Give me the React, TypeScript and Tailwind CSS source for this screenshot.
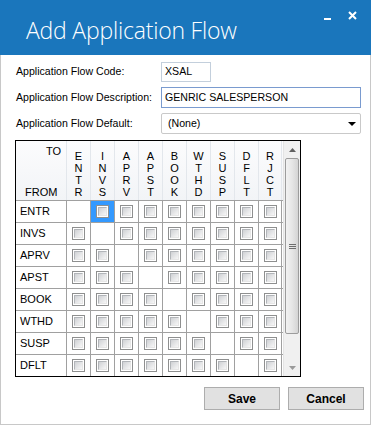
import React from "react";

const ROWS = ["ENTR", "INVS", "APRV", "APST", "BOOK", "WTHD", "SUSP", "DFLT"];
const COLS = ["ENTR", "INVS", "APRV", "APST", "BOOK", "WTHD", "SUSP", "DFLT", "RJCT"];

function Check() {
  return (
    <div className="w-[13px] h-[13px] border border-[#8e8f8f] bg-white p-[1px]">
      <div className="w-full h-full border-t border-l border-[#b2b5b9] border-r border-b border-r-[#e6e6e6] border-b-[#e6e6e6] bg-[linear-gradient(135deg,#cfd1d4,#f7f7f7)]" />
    </div>
  );
}

function Scrollbar() {
  return (
    <div className="w-[17px] flex flex-col bg-[#f0f0f0] border-l border-[#e4e4e4]">
      <div className="h-[17px] flex items-center justify-center">
        <svg width="7" height="4" viewBox="0 0 7 4">
          <path d="M3.5 0 L7 4 L0 4 Z" fill="#606060" />
        </svg>
      </div>
      <div className="h-[176px] mx-[1px] rounded-[2px] border border-[#9c9c9c] bg-[linear-gradient(90deg,#f2f2f2,#e6e6e6_50%,#d4d4d4)] flex items-center justify-center">
        <div className="flex flex-col gap-[1px]">
          <div className="w-[7px] h-[1px] bg-[#6e6e6e]" />
          <div className="w-[7px] h-[1px] bg-[#6e6e6e]" />
          <div className="w-[7px] h-[1px] bg-[#6e6e6e]" />
        </div>
      </div>
      <div className="flex-1" />
      <div className="h-[17px] flex items-center justify-center">
        <svg width="7" height="4" viewBox="0 0 7 4">
          <path d="M0 0 L7 0 L3.5 4 Z" fill="#9a9a9a" />
        </svg>
      </div>
    </div>
  );
}

export default function App() {
  const grid = { fontFamily: '"Liberation Sans", Arial, sans-serif' };
  return (
    <div className="w-[371px] h-[426px] bg-white flex flex-col" style={grid}>
      <div className="h-[55px] bg-[#1a76bc] flex items-start justify-between">
        <div
          className="pl-[26px] pt-[15px] text-white text-[23px] leading-[30px] font-light tracking-[-0.2px]"
          style={{ fontFamily: '"Open Sans", "Noto Sans", sans-serif' }}
        >
          Add Application Flow
        </div>
        <div className="flex items-start pt-[11px] pr-[14px] gap-[17px]">
          <div className="w-[7px] h-[2px] bg-white mt-[7px]" />
          <svg width="9" height="9" viewBox="0 0 9 9">
            <path d="M1 1 L8 8 M8 1 L1 8" stroke="white" strokeWidth="2" />
          </svg>
        </div>
      </div>
      <div className="flex-1 border-x border-b border-[#c8c8c8] mb-[1px] flex flex-col pl-[14px] pr-[5px] pt-[7px] text-[10.6px] text-black">
        <div className="flex items-center h-[20px]">
          <div className="w-[146px] pl-[1px]">Application Flow Code:</div>
          <div className="w-[50px] h-[20px] border border-[#c3cfdc] flex items-center pl-[3px]">XSAL</div>
        </div>
        <div className="flex items-center h-[21px] mt-[5px]">
          <div className="w-[146px] pl-[1px]">Application Flow Description:</div>
          <div className="w-[200px] h-[21px] border border-[#7a9bcf] flex items-center pl-[3px]">GENRIC SALESPERSON</div>
        </div>
        <div className="flex items-center h-[21px] mt-[5px]">
          <div className="w-[146px] pl-[1px]">Application Flow Default:</div>
          <div className="w-[200px] h-[21px] border border-[#c9c9c9] rounded-[2px] flex items-center pl-[6px] pr-[4px] justify-between">
            <span>(None)</span>
            <svg width="8" height="4" viewBox="0 0 8 4">
              <path d="M0 0 L8 0 L4 4 Z" fill="#000" />
            </svg>
          </div>
        </div>
        <div className="mt-[6px] w-[286px] border border-black flex text-[11px]">
          <div className="flex flex-col w-[267px]">
            <div className="h-[59px] flex bg-[linear-gradient(180deg,#fcfcfd,#f2f4f7)]">
              <div className="w-[50px] flex flex-col justify-between pt-[4px] pb-[2px] leading-[12px]">
                <div className="text-right pr-[5px]">TO</div>
                <div className="pl-[9px]">FROM</div>
              </div>
              {COLS.map((c, i) => (
                <div
                  key={c}
                  className={`w-[24px] border-l border-[#e3e7ec] flex flex-col items-center justify-end pb-[2px] leading-[12px] ${i === COLS.length - 1 ? "border-r" : ""}`}
                >
                  {c.split("").map((ch, k) => (
                    <div key={k}>{ch}</div>
                  ))}
                </div>
              ))}
            </div>
            {ROWS.map((r, ri) => (
              <div key={r} className="h-[22px] flex border-t border-[#a0a0a0]">
                <div className="w-[50px] flex items-center pl-[4px]">{r}</div>
                {COLS.map((c, ci) => (
                  <div
                    key={c}
                    className={`w-[24px] border-l border-[#a0a0a0] flex items-center justify-center ${ci === COLS.length - 1 ? "border-r" : ""} ${ri === 0 && ci === 1 ? "bg-[#3399ff]" : ""}`}
                  >
                    {ri !== ci && <Check />}
                  </div>
                ))}
              </div>
            ))}
          </div>
          <Scrollbar />
        </div>
        <div className="flex justify-end gap-[8px] mt-[10px] pr-[1px]">
          <button className="w-[76px] h-[23px] bg-[#e1e1e1] border border-[#adadad] text-[12px] font-bold text-black">
            Save
          </button>
          <button className="w-[76px] h-[23px] bg-[#e1e1e1] border border-[#adadad] text-[12px] font-bold text-black">
            Cancel
          </button>
        </div>
      </div>
    </div>
  );
}
